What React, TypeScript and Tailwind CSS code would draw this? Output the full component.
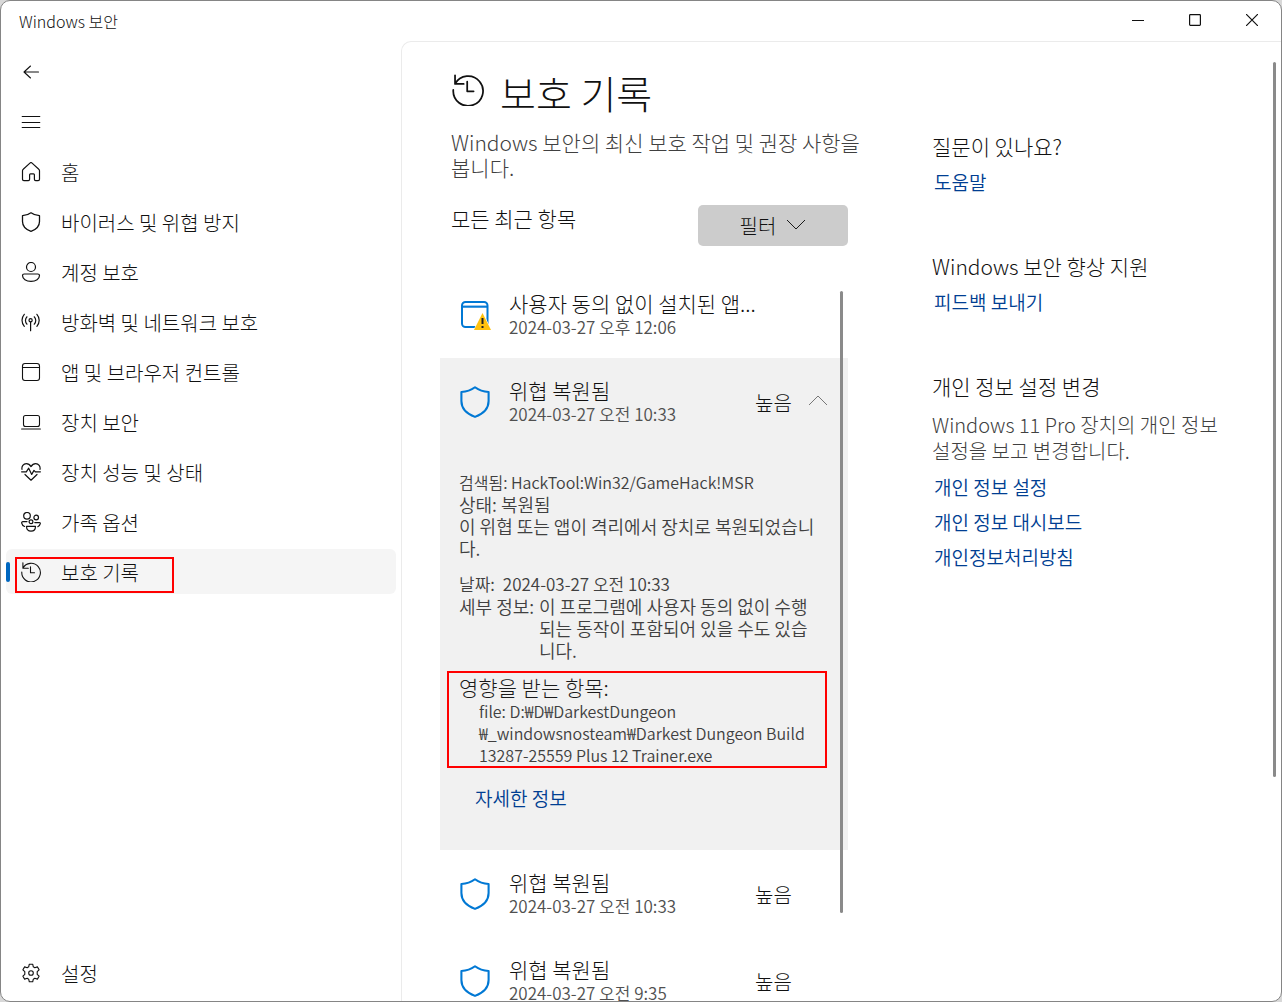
import React from 'react';

type IconProps = { className?: string };

const iconBase = {
  viewBox: '0 0 20 20',
  fill: 'none',
  stroke: 'currentColor',
  strokeWidth: 1.1,
  strokeLinecap: 'round' as const,
  strokeLinejoin: 'round' as const,
  'aria-hidden': true,
};

const BackIcon = ({ className }: IconProps) => (
  <svg {...iconBase} className={className}>
    <path d="M17.5 10H3M9.500 4 3 10l6.500 6" />
  </svg>
);

const MenuIcon = ({ className }: IconProps) => (
  <svg {...iconBase} className={className}>
    <path d="M1.200 4.500h17.600M1.200 10.500h17.600M1.200 15.500h17.600" />
  </svg>
);

const HomeIcon = ({ className }: IconProps) => (
  <svg {...iconBase} strokeWidth={1.2} className={className}>
    <path d="M9.200.9a1.200 1.200 0 0 1 1.600 0l7 6.300c.5.4.7 1 .7 1.600v8.400c0 .8-.6 1.400-1.400 1.400h-2.400c-.7 0-1.300-.6-1.300-1.400v-4.500c0-.5-.4-.9-.9-.9h-3c-.5 0-.9.4-.9.9v4.500c0 .8-.6 1.400-1.300 1.400H2.900c-.8 0-1.400-.6-1.400-1.400V8.800c0-.6.2-1.200.7-1.600z" />
  </svg>
);

const ShieldIcon = ({ className }: IconProps) => (
  <svg {...iconBase} strokeWidth={1.3} className={className}>
    <path d="M10 .8c2.400 1.800 5.200 2.800 8.500 2.900v5.700c0 4.500-3 7.900-8.500 9.900-5.500-2-8.500-5.400-8.500-9.900V3.700C4.800 3.600 7.600 2.600 10 .8z" />
  </svg>
);

const AccountIcon = ({ className }: IconProps) => (
  <svg {...iconBase} strokeWidth={1.2} className={className}>
    <circle cx="10" cy="5" r="4.500" />
    <path d="M3.200 12h13.600c1 0 1.700.7 1.700 1.600 0 3.300-3.600 5.700-8.500 5.700s-8.500-2.400-8.500-5.700c0-.9.700-1.600 1.700-1.600z" />
  </svg>
);

const NetworkIcon = ({ className }: IconProps) => (
  <svg {...iconBase} strokeWidth={1.2} className={className}>
    <circle cx="9.600" cy="8.300" r="1.600" />
    <path d="M9.600 10v8.700M3.300 2.300a9 9 0 0 0 0 12M15.900 2.300a9 9 0 0 1 0 12M6 4.800a5.200 5.200 0 0 0 0 7.400M13.200 4.800a5.200 5.200 0 0 1 0 7.400" />
  </svg>
);

const BrowserIcon = ({ className }: IconProps) => (
  <svg {...iconBase} className={className}>
    <rect x="1.500" y="1.500" width="17" height="17" rx="2.500" />
    <path d="M1.500 5.500h17" />
  </svg>
);

const LaptopIcon = ({ className }: IconProps) => (
  <svg {...iconBase} className={className}>
    <rect x="2.500" y="3.500" width="16" height="11" rx="2" />
    <path d="M.6 17h18.800" />
  </svg>
);

const HealthIcon = ({ className }: IconProps) => (
  <svg {...iconBase} strokeWidth={1.2} className={className}>
    <path d="M1 7.500C.4 4.500 2.400 1.700 5.300 1.700c2 0 3.600 1.100 4.700 2.900 1.100-1.800 2.700-2.900 4.700-2.900 2.900 0 4.900 2.800 4.300 5.800" />
    <path d="M.6 9.800h4.700l2.400-3.600 3 6.200 2.300-4 1.300 1.400h5.100M4 12.500l6 5.700 6-5.700" />
  </svg>
);

const FamilyIcon = ({ className }: IconProps) => (
  <svg {...iconBase} strokeWidth={1.2} className={className}>
    <circle cx="6" cy="3.800" r="3.300" />
    <circle cx="15.200" cy="5.500" r="2.300" />
    <circle cx="10" cy="9.800" r="1.900" />
    <path d="M5.500 14.300h9c0 3-1.600 4.900-4.500 4.900s-4.500-1.900-4.500-4.900zM6 9.600H2c-1 0-1.500.6-1.300 1.600.3 1.600 1.300 2.800 2.900 3.300M13.800 10.600h4.600c.7 0 1 .4.900 1.100-.3 1.500-1.200 2.500-2.500 3" />
  </svg>
);

const HistoryIcon = ({ className }: IconProps) => (
  <svg {...iconBase} className={className}>
    <path d="M1.900 6.200A9.300 9.300 0 1 1 .8 10M1.900.8v5.400h5.400M9.500 4.800v6h4" />
  </svg>
);

const SettingsIcon = ({ className }: IconProps) => (
  <svg {...iconBase} className={className}>
    <circle cx="10" cy="10" r="2.300" />
    <path d="M8.300 1.200h3.400l.6 2.600 1.500.9 2.600-.8 1.700 2.900-1.900 1.900v2.600l1.900 1.900-1.700 2.900-2.600-.8-1.500.9-.6 2.600H8.300l-.6-2.600-1.500-.9-2.600.8-1.700-2.900 1.900-1.900V8.700L1.900 6.800l1.700-2.900 2.600.8 1.500-.9z" />
  </svg>
);

const AppWarningIcon = ({ className }: IconProps) => (
  <svg viewBox="0 0 32 32" fill="none" className={className} aria-hidden>
    <path d="M3 6h26v3H3z" fill="#9cc9ef" />
    <rect x="3" y="3" width="25.500" height="25" rx="3.500" stroke="#0078d4" strokeWidth="2" />
    <path d="M3 7.800h25.500" stroke="#0078d4" strokeWidth="1.500" />
    <path d="M23.500 13.500 15 31h17z" fill="#fff" stroke="#fff" strokeWidth="1" />
    <path d="M23.500 14 15 31h17z" fill="#ffc20e" />
    <path d="M23.500 19v6M23.500 27v2" stroke="#222" strokeWidth="2" />
  </svg>
);

const navItems = [
  { label: '홈', Icon: HomeIcon },
  { label: '바이러스 및 위협 방지', Icon: ShieldIcon },
  { label: '계정 보호', Icon: AccountIcon },
  { label: '방화벽 및 네트워크 보호', Icon: NetworkIcon },
  { label: '앱 및 브라우저 컨트롤', Icon: BrowserIcon },
  { label: '장치 보안', Icon: LaptopIcon },
  { label: '장치 성능 및 상태', Icon: HealthIcon },
  { label: '가족 옵션', Icon: FamilyIcon },
  { label: '보호 기록', Icon: HistoryIcon, active: true },
];

interface NavItemProps {
  label: string;
  Icon: React.FC<IconProps>;
  active?: boolean;
}

const NavItem: React.FC<NavItemProps> = ({ label, Icon, active }) => (
  <a
    href="#"
    aria-current={active ? 'page' : undefined}
    className={`relative flex h-[45px] items-center gap-5 rounded-md pl-[15px] text-[20px] ${active ? 'bg-[#f5f5f5]' : ''}`}
  >
    {active && <span className="absolute left-0 top-[13px] h-5 w-1 rounded-full bg-[#0067c0]" />}
    <Icon className="size-5 shrink-0" />
    <span className="pt-[3px]">{label}</span>
    {active && <span className="absolute left-[9px] top-2 h-9 w-[159px] border-2 border-[#f00]" />}
  </a>
);

interface HistoryRowProps {
  title: string;
  date: string;
  severity?: string;
  expanded?: boolean;
  warning?: boolean;
}

const HistoryRow: React.FC<HistoryRowProps> = ({ title, date, severity, expanded, warning }) => (
  <button
    type="button"
    aria-expanded={!!expanded}
    className="flex h-[87px] w-full shrink-0 items-center pl-[19px] pr-5 text-left"
  >
    {warning ? (
      <AppWarningIcon className="size-8 shrink-0" />
    ) : (
      <ShieldIcon className="size-8 shrink-0 text-[#0078d4]" />
    )}
    <span className="ml-[18px] flex min-w-0 flex-1 flex-col">
      <span className="whitespace-nowrap text-[21px] leading-6">{title}</span>
      <span className="text-[17px] font-[350] leading-6 text-[#505050]">{date}</span>
    </span>
    {severity && <span className="w-[73px] pt-[3px] text-[20px]">{severity}</span>}
    {severity && expanded && (
      <svg viewBox="0 0 20 20" fill="none" stroke="#777" className="-ml-5 size-5" aria-hidden>
        <path d="m1 13 9-9 9 9" />
      </svg>
    )}
  </button>
);

const HistoryDetails = () => (
  <div className="px-[7px] pb-10 pt-[26px] text-[16px] font-[350] leading-[22px] text-[#404040]">
    <div className="pl-3">
      <p>검색됨: HackTool:Win32/GameHack!MSR</p>
      <p className="text-[18px] leading-[22px]">상태: 복원됨</p>
      <p className="whitespace-nowrap text-[18px] leading-[22px]">
        이 위협 또는 앱이 격리에서 장치로 복원되었습니
        <br />
        다.
      </p>
      <dl className="mt-[14px]">
        <div className="flex gap-2 text-[17px] leading-[22px]">
          <dt>날짜:</dt>
          <dd>2024-03-27 오전 10:33</dd>
        </div>
        <div className="flex whitespace-nowrap text-[18px] leading-[22px]">
          <dt className="w-20 shrink-0">세부 정보:</dt>
          <dd>
            이 프로그램에 사용자 동의 없이 수행
            <br />
            되는 동작이 포함되어 있을 수도 있습
            <br />
            니다.
          </dd>
        </div>
      </dl>
    </div>
    <div className="mr-[14px] mt-2.5 h-[97px] border-2 border-[#f00] pl-[10px] pt-px">
      <h3 className="text-[21px] font-light leading-[26px] text-[#1a1a1a]">영향을 받는 항목:</h3>
      <p className="whitespace-nowrap pl-5">
        file: D:₩D₩DarkestDungeon
        <br />
        ₩_windowsnosteam₩Darkest Dungeon Build
        <br />
        13287-25559 Plus 12 Trainer.exe
      </p>
    </div>
    <a href="#" className="ml-7 mt-[18px] inline-block text-[19px] leading-6 text-[#003e92]">
      자세한 정보
    </a>
  </div>
);

const SideLink = ({ children }: { children: React.ReactNode }) => (
  <a href="#" className="ml-0.5 block text-[19px] font-[350] leading-[35px] text-[#003e92]">
    {children}
  </a>
);

const App: React.FC = () => {
  return (
    <div className="h-screen bg-[#d8d8d8] font-['Noto_Sans_CJK_KR',sans-serif] font-light text-[#111111]">
      <div className="flex h-full flex-col overflow-hidden rounded-[10px] border border-[#858585] bg-white">
        <header className="flex h-10 shrink-0 items-center justify-between pl-[18px]">
          <h1 className="text-[16px]">Windows 보안</h1>
          <div className="flex h-full pb-0.5 pr-px">
            <button type="button" aria-label="최소화" className="flex w-[57px] items-center justify-center">
              <svg viewBox="0 0 12 12" className="size-3" stroke="#111" strokeWidth="1.200">
                <path d="M0 6.500h12" />
              </svg>
            </button>
            <button type="button" aria-label="최대화" className="flex w-[57px] items-center justify-center">
              <svg viewBox="0 0 12 12" className="size-3" fill="none" stroke="#111" strokeWidth="1.200">
                <rect x=".6" y=".6" width="10.800" height="10.800" rx=".8" />
              </svg>
            </button>
            <button type="button" aria-label="닫기" className="flex w-[57px] items-center justify-center">
              <svg viewBox="0 0 12 12" className="size-3" stroke="#111" strokeWidth="1.200">
                <path d="m0 0 12 12M12 0 0 12" />
              </svg>
            </button>
          </div>
        </header>

        <div className="flex min-h-0 flex-1">
          <nav className="flex w-[400px] shrink-0 flex-col gap-[5px] px-[5px] pb-1.5 pt-2">
            <button type="button" aria-label="뒤로" className="flex h-[45px] items-center pl-[15px]">
              <BackIcon className="size-5" />
            </button>
            <button type="button" aria-label="메뉴" className="flex h-[45px] items-center pl-[15px]">
              <MenuIcon className="size-5" />
            </button>
            {navItems.map((item) => (
              <NavItem key={item.label} {...item} />
            ))}
            <div className="mt-auto">
              <NavItem label="설정" Icon={SettingsIcon} />
            </div>
          </nav>

          <main className="relative flex min-w-0 flex-1 overflow-hidden rounded-tl-[10px] border-l border-t border-[#ebebeb] pl-[38px]">
            <section className="relative flex w-[408px] shrink-0 flex-col">
              <div className="flex items-center gap-4 pl-3 pt-[18px]">
                <HistoryIcon className="size-8" />
                <h2 className="pt-1 text-[39px] leading-[56px]">보호 기록</h2>
              </div>
              <p className="mt-2.5 whitespace-nowrap pl-[11px] text-[21px] leading-[25px] text-[#404040]">
                Windows 보안의 최신 보호 작업 및 권장 사항을
                <br />
                봅니다.
              </p>
              <div className="mt-[25px] flex items-start justify-between pl-[11px]">
                <span className="text-[21px] leading-[26px]">모든 최근 항목</span>
                <button
                  type="button"
                  className="flex h-[41px] w-[150px] items-center justify-center gap-2.5 rounded-[5px] bg-[#cccccc] text-[20px]"
                >
                  필터
                  <svg viewBox="0 0 20 20" fill="none" stroke="#1a1a1a" className="size-5" aria-hidden>
                    <path d="m1 4 9 9 9-9" />
                  </svg>
                </button>
              </div>

              <div className="mt-[25px] flex flex-col">
                <HistoryRow title="사용자 동의 없이 설치된 앱..." date="2024-03-27 오후 12:06" warning />
                <div className="bg-[#f1f1f1]">
                  <HistoryRow title="위협 복원됨" date="2024-03-27 오전 10:33" severity="높음" expanded />
                  <HistoryDetails />
                </div>
                <HistoryRow title="위협 복원됨" date="2024-03-27 오전 10:33" severity="높음" />
                <HistoryRow title="위협 복원됨" date="2024-03-27 오전 9:35" severity="높음" />
              </div>
              <div className="absolute right-[5px] top-[249px] h-[622px] w-[3px] rounded-full bg-[#8a8a8a]" />
            </section>

            <aside className="ml-[84px] min-w-0 flex-1 pt-[86px] text-[21px]">
              <h3 className="leading-9">질문이 있나요?</h3>
              <SideLink>도움말</SideLink>
              <h3 className="mt-[49px] leading-9">Windows 보안 향상 지원</h3>
              <SideLink>피드백 보내기</SideLink>
              <h3 className="mt-[49px] leading-9">개인 정보 설정 변경</h3>
              <p className="mb-[5px] mt-2 whitespace-nowrap text-[20px] leading-[26px] text-[#404040]">
                Windows 11 Pro 장치의 개인 정보
                <br />
                설정을 보고 변경합니다.
              </p>
              <SideLink>개인 정보 설정</SideLink>
              <SideLink>개인 정보 대시보드</SideLink>
              <SideLink>개인정보처리방침</SideLink>
            </aside>
            <div className="absolute right-[5px] top-5 h-[715px] w-[3px] rounded-full bg-[#8a8a8a]" />
          </main>
        </div>
      </div>
    </div>
  );
};

export default App;
